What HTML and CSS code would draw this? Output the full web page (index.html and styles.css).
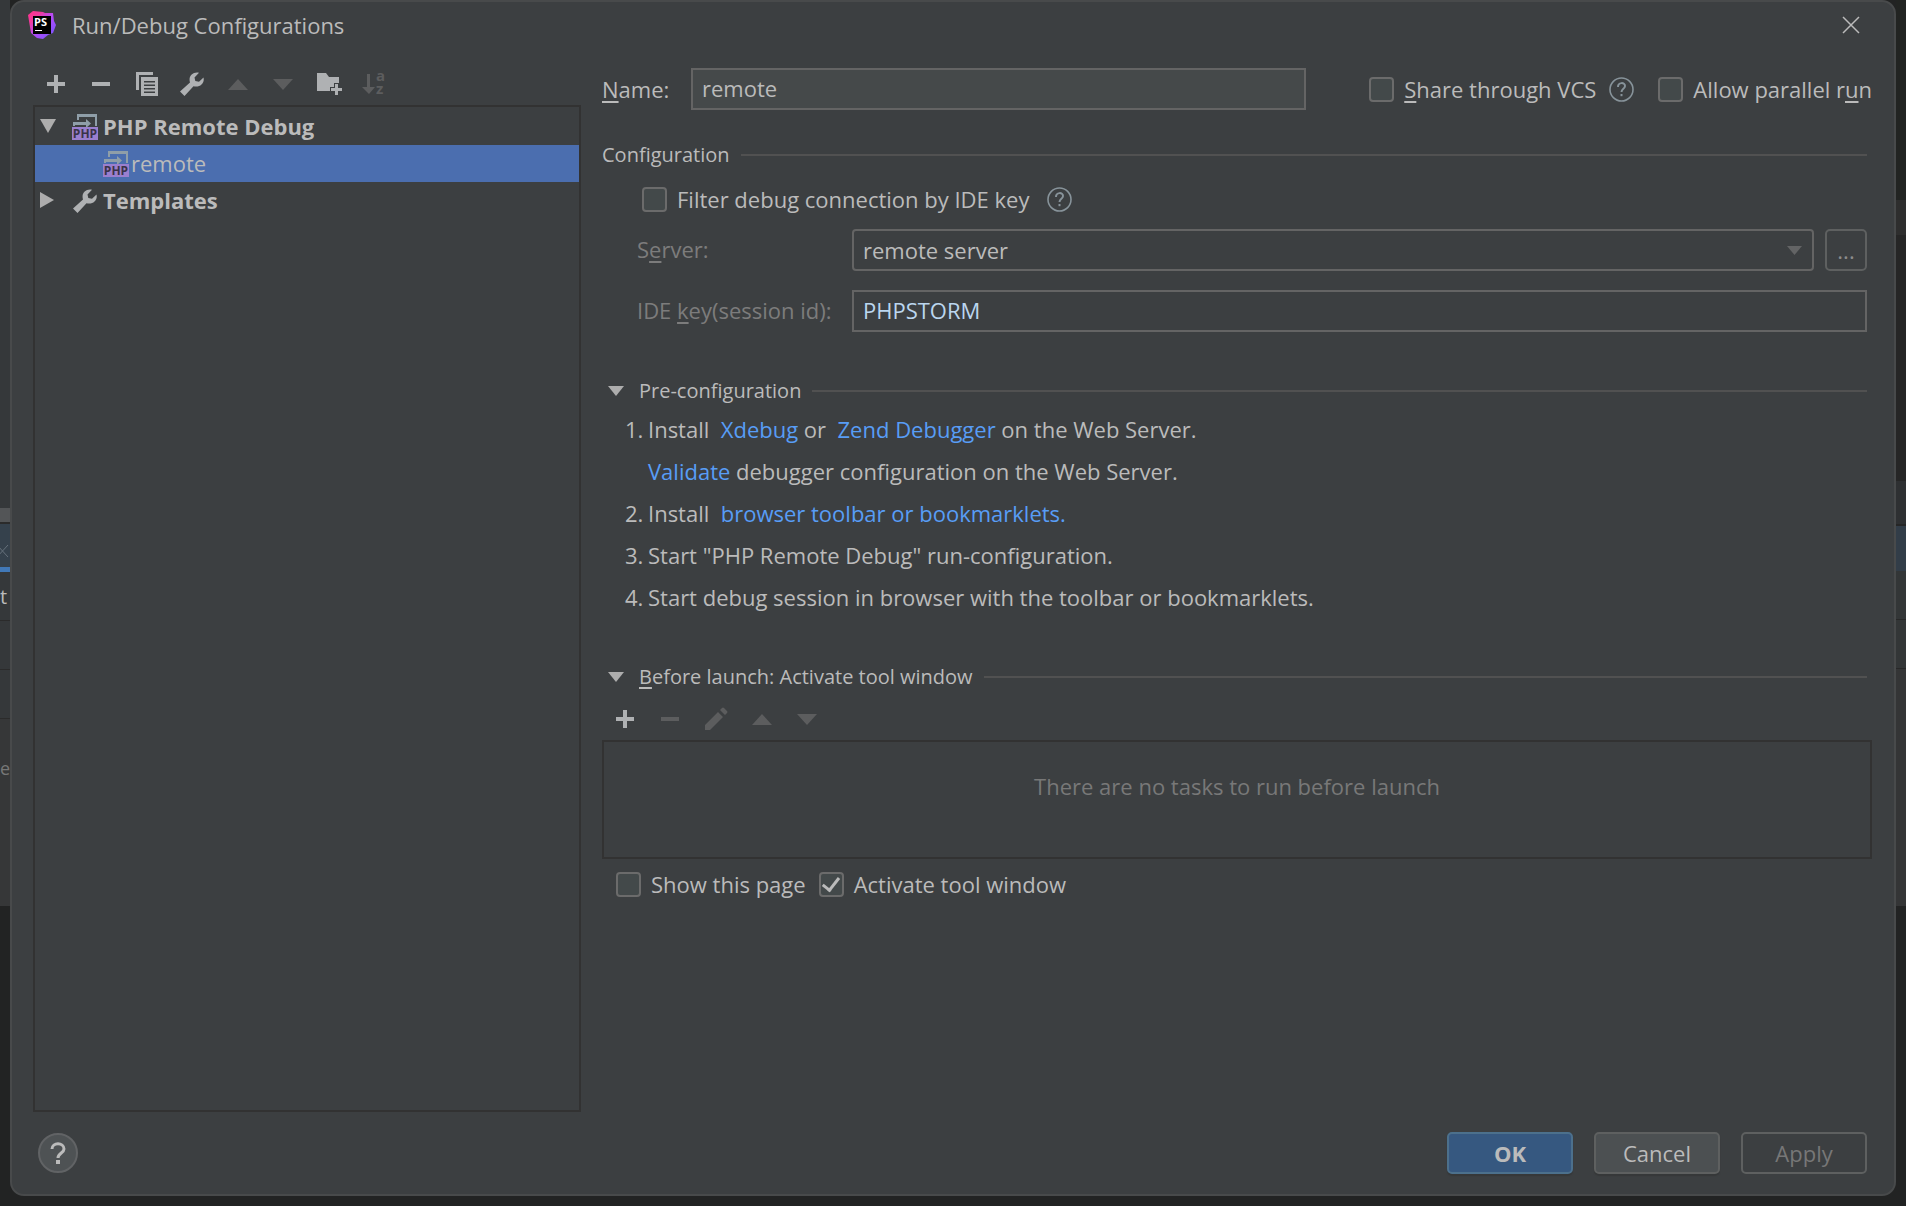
FILE: index.html
```
<!DOCTYPE html>
<html lang="en">
<head>
	<meta charset="UTF-8">
	<title>Run/Debug Configurations</title>
	<link rel="stylesheet" href="styles.css">
</head>
<body>
	<!-- shared icons -->
	<svg class="sprite" aria-hidden="true">
		<symbol id="plus" viewBox="0 0 18 18"><path d="M7 0h4v7h7v4h-7v7H7v-7H0V7h7z"/></symbol>
		<symbol id="minus" viewBox="0 0 18 18"><path d="M0 7h18v4H0z"/></symbol>
		<symbol id="up" viewBox="0 0 20 11"><path d="M0 11L10 0l10 11z"/></symbol>
		<symbol id="down" viewBox="0 0 20 11"><path d="M0 0h20L10 11z"/></symbol>
		<symbol id="wrench" viewBox="0 0 24 24"><path d="M0 19.500L10 10.500C8 4 13-.5 19 .8L14.500 5.500l.8 3.500 3.700.8 4.500-4.300c1.500 6-4 10.500-10 8.700L4.500 24z"/></symbol>
		<symbol id="help" viewBox="0 0 25 25"><circle cx="12.500" cy="12.500" r="11.500" fill="none" stroke="currentColor" stroke-width="1.600"/><path d="M9 10c0-5 7-5 7-1 0 3-3.500 2.500-3.500 6" fill="none" stroke="currentColor" stroke-width="2"/><path d="M11.500 17h2v2.200h-2z"/></symbol>
		<symbol id="phpdebug" viewBox="0 0 26 27">
			<path d="M5 7V1h20v12h-2V4H7v3z" fill="#8f9ea8"/>
			<path d="M1 13V9h13V6l5 4.500-5 4.500v-3H3v1z" fill="#8f9ea8"/>
			<path d="M0 14h26v13H0z" fill="#9a7fce"/>
			<text class="php-text" x="13" y="25" text-anchor="middle">PHP</text>
		</symbol>
	</svg>

	<div class="strip strip-left">
		<div class="l-editor"></div>
		<div class="l-bar"></div>
		<div class="l-tab"><svg width="10" height="14"><path d="M-3 1L8 13M-3 13L8 1" stroke="#66717b" fill="none"/></svg></div>
		<div class="l-row l-first">t</div>
		<div class="l-row"></div>
		<div class="l-row"></div>
		<div class="l-panel">e</div>
	</div>

	<main class="dialog">
		<header class="titlebar">
			<svg class="logo" viewBox="0 0 28 28">
				<defs><linearGradient id="lg" x1="0" y1="0" x2="1" y2="1"><stop offset="0" stop-color="#ff318c"/><stop offset=".25" stop-color="#f03a9c"/><stop offset=".5" stop-color="#b74af7"/><stop offset="1" stop-color="#6b57ff"/></linearGradient></defs>
				<path d="M0 4L5 0l10 1 2 1 8 0 1 8 2 4-3 8-5 2-5 4-6-1-6-5z" fill="url(#lg)"/>
				<path d="M5 5h18v18H5z"/>
				<text class="logo-text" x="6" y="15">PS</text>
				<path d="M7 19h7v1H7z" fill="#fff"/>
			</svg>
			<h1>Run/Debug Configurations</h1>
			<button class="close" aria-label="Close"><svg width="18" height="18"><path d="M1 1l16 16M17 1L1 17" stroke="currentColor" stroke-width="1.500"/></svg></button>
		</header>

		<div class="columns">
			<aside class="sidebar">
				<div class="toolbar tree-toolbar">
					<button aria-label="Add"><svg width="18" height="18"><use href="#plus"/></svg></button>
					<button aria-label="Remove"><svg width="18" height="18"><use href="#minus"/></svg></button>
					<button aria-label="Copy"><svg width="22" height="24"><path d="M0 0h17v3H3v15H0z"/><path fill-rule="evenodd" d="M5 5h17v19H5zM8 9v1.500h11V9zm0 3.500V14h11v-1.500zM8 16v1.500h11V16zm0 3.500V21h11v-1.500z"/></svg></button>
					<button aria-label="Edit templates"><svg width="24" height="24"><use href="#wrench"/></svg></button>
					<button aria-label="Move up" disabled><svg width="20" height="11"><use href="#up"/></svg></button>
					<button aria-label="Move down" disabled><svg width="20" height="11"><use href="#down"/></svg></button>
					<button aria-label="New folder"><svg width="26" height="22"><path d="M1 0h9l3 4h10v6h-5v4h-4v4H1z"/><path d="M19 11h3v4h4v3h-4v4h-3v-4h-4v-3h4z"/></svg></button>
					<button aria-label="Sort" disabled><svg class="sort" width="24" height="26"><path d="M5 3h3v13h5l-6 7-7-7h5z"/><text class="sort-text" x="14" y="10">a</text><text class="sort-text" x="14" y="23">z</text></svg></button>
				</div>
				<ul class="tree">
					<li class="node group"><svg class="arrow" viewBox="0 0 16 16"><path d="M0 1h16L8 15z"/></svg><svg class="node-icon"><use href="#phpdebug"/></svg>PHP Remote Debug</li>
					<li class="node child selected"><svg class="node-icon"><use href="#phpdebug"/></svg>remote</li>
					<li class="node group"><svg class="arrow" viewBox="0 0 16 16"><path d="M0 0v16l14-8z"/></svg><svg class="node-icon wrench"><use href="#wrench"/></svg>Templates</li>
				</ul>
			</aside>

			<form class="settings">
				<div class="name-row">
					<label for="name"><u>N</u>ame:</label>
					<input class="field name-field" type="text" id="name" value="remote">
					<div class="options">
						<label class="check"><input type="checkbox"><span><u>S</u>hare through VCS</span></label>
						<svg class="help-icon"><use href="#help"/></svg>
						<label class="check"><input type="checkbox"><span>Allow parallel r<u>u</u>n</span></label>
					</div>
				</div>

				<h2 class="section first">Configuration</h2>
				<div class="filter-row">
					<label class="check"><input type="checkbox"><span>Filter debug connection by IDE key</span></label>
					<svg class="help-icon"><use href="#help"/></svg>
				</div>
				<div class="form-row">
					<label for="server">S<u>e</u>rver:</label>
					<div class="select-box">
						<select class="field" id="server"><option>remote server</option></select>
						<svg class="select-arrow" width="15" height="9" viewBox="0 0 20 11" preserveAspectRatio="none"><path d="M0 0h20L10 11z"/></svg>
					</div>
					<button class="browse" type="button">...</button>
				</div>
				<div class="form-row key-row">
					<label for="key">IDE <u>k</u>ey(session id):</label>
					<input class="field key-field" type="text" id="key" value="PHPSTORM">
				</div>

				<h2 class="section folding"><svg width="16" height="10" viewBox="0 0 16 10"><path d="M0 0h16L8 10z"/></svg>Pre-configuration</h2>
				<div class="steps">
					<p><b>1.</b>Install &nbsp;<a href="#">Xdebug</a> or &nbsp;<a href="#">Zend Debugger</a> on the Web Server.</p>
					<p><b></b><a href="#">Validate</a> debugger configuration on the Web Server.</p>
					<p><b>2.</b>Install &nbsp;<a href="#">browser toolbar or bookmarklets.</a></p>
					<p><b>3.</b>Start "PHP Remote Debug" run-configuration.</p>
					<p><b>4.</b>Start debug session in browser with the toolbar or bookmarklets.</p>
				</div>

				<h2 class="section folding launch"><svg width="16" height="10" viewBox="0 0 16 10"><path d="M0 0h16L8 10z"/></svg><span><u>B</u>efore launch: Activate tool window</span></h2>
				<div class="toolbar task-toolbar">
					<button type="button" aria-label="Add task"><svg width="18" height="18"><use href="#plus"/></svg></button>
					<button type="button" aria-label="Remove task" disabled><svg width="18" height="18"><use href="#minus"/></svg></button>
					<button type="button" aria-label="Edit task" disabled><svg width="24" height="24"><path d="M1 18L14 5l5 5L6 23H1zM16 3l2-2q1-1 2 0l3 3q1 1 0 2l-2 2z"/></svg></button>
					<button type="button" aria-label="Move task up" disabled><svg width="20" height="11"><use href="#up"/></svg></button>
					<button type="button" aria-label="Move task down" disabled><svg width="20" height="11"><use href="#down"/></svg></button>
				</div>
				<div class="tasks">There are no tasks to run before launch</div>
				<div class="launch-options">
					<label class="check"><input type="checkbox"><span>Show this page</span></label>
					<label class="check"><input type="checkbox" checked><span>Activate tool window</span></label>
				</div>
			</form>
		</div>

		<footer class="footer">
			<button class="help-button" aria-label="Help"><svg width="16" height="22"><path d="M2 7c0-7 12-7 12 0 0 4-6 4-6 9" fill="none" stroke="currentColor" stroke-width="3"/><path d="M6 18h4v4H6z"/></svg></button>
			<button class="btn primary">OK</button>
			<button class="btn">Cancel</button>
			<button class="btn" disabled>Apply</button>
		</footer>
	</main>

	<div class="strip strip-right">
		<div class="r-top"></div>
		<div class="r-bar"></div>
		<div class="r-editor"></div>
		<div class="r-head"></div>
		<div class="r-tab"></div>
		<div class="r-row"></div>
		<div class="r-row"></div>
		<div class="r-panel"></div>
	</div>
</body>
</html>
```
FILE: styles.css
```
* {
	box-sizing: border-box;
}

body {
	margin: 0;
	min-height: 100vh;
	display: grid;
	grid-template-columns: 10px 1fr 10px;
	background-color: #222323;
	color: #bbbbbb;
	font-family: "Open Sans", "Noto Sans", sans-serif;
	font-size: 22px;
	line-height: 26px;
}

button, input, select {
	font: inherit;
	color: inherit;
}

button {
	padding: 0;
	border: none;
	background: none;
}

svg {
	fill: currentColor;
	flex: none;
}

u {
	text-underline-offset: 3px;
}

.sprite {
	position: absolute;
	width: 0;
	height: 0;
}

/* window behind the dialog */
.strip {
	overflow: hidden;
}

.l-editor {
	height: 508px;
	background-color: #35383a;
}

.l-bar {
	height: 16px;
	background-color: #535557;
	border-bottom: 2px solid #2b2b2b;
}

.l-tab {
	height: 48px;
	padding-top: 18px;
	background-color: #35414c;
	border-bottom: 5px solid #4179b8;
	line-height: 14px;
}

.l-row {
	height: 49px;
	background-color: #35383a;
	border-bottom: 1px solid #2b2b2b;
}

.l-first {
	padding-top: 12px;
	font-size: 20px;
}

.l-panel {
	height: 187px;
	padding-top: 36px;
	background-color: #363738;
	color: #777777;
	font-size: 18px;
}

.r-top {
	height: 200px;
	background-color: #222422;
}

.r-bar {
	height: 35px;
	background-color: #2e2e2e;
}

.r-editor {
	height: 246px;
	background-color: #262626;
}

.r-head {
	height: 45px;
	background-color: #2e3032;
	border-bottom: 2px solid #262626;
}

.r-tab {
	height: 45px;
	background-color: #323d48;
}

.r-row {
	height: 49px;
	background-color: #333637;
	border-bottom: 1px solid #282828;
}

.r-panel {
	height: 237px;
	background-color: #343536;
}

.dialog {
	display: flex;
	flex-direction: column;
	margin-bottom: 10px;
	background-color: #3c3f41;
	border: 2px solid #484a4b;
	border-radius: 14px;
}

.titlebar {
	display: flex;
	align-items: center;
	height: 48px;
	padding: 0 34px 2px 16px;
}

.logo {
	width: 28px;
	height: 28px;
	fill: #000000;
	overflow: visible;
}

.logo-text {
	font-size: 11px;
	font-weight: bold;
	fill: #ffffff;
}

h1 {
	flex: 1;
	margin: 0 0 0 16px;
	font-size: 22px;
	font-weight: normal;
}

.close {
	display: flex;
}

.columns {
	flex: 1;
	display: flex;
	gap: 21px;
	padding: 0 22px 0 21px;
}

.sidebar {
	display: flex;
	flex-direction: column;
	flex: 0 0 548px;
	padding-top: 13px;
}

.toolbar {
	display: flex;
	color: #afb1b3;
}

.tree-toolbar {
	width: 364px;
}

.task-toolbar {
	width: 228px;
}

.toolbar button {
	display: flex;
	align-items: center;
	justify-content: center;
	flex: 1;
	height: 42px;
}

.toolbar button:disabled {
	color: #5c5d5e;
}

.sort {
	overflow: visible;
}

.sort-text {
	font-size: 15px;
	font-weight: bold;
}

.tree {
	flex: 1;
	margin: 0;
	padding: 1px 0 0;
	list-style: none;
	border: 2px solid #323232;
}

.node {
	display: flex;
	align-items: center;
	gap: 5px;
	height: 37px;
	padding: 0 0 2px 5px;
}

.group {
	font-weight: bold;
}

.child {
	gap: 2px;
	padding-left: 68px;
}

.selected {
	background-color: #4b6eaf;
}

.arrow {
	width: 16px;
	height: 16px;
	margin-right: 11px;
	color: #adadad;
}

.node-icon {
	width: 26px;
	height: 27px;
	margin-top: 2px;
}

.node-icon.wrench {
	height: 24px;
	color: #afb1b3;
}

.php-text {
	font-size: 12px;
	font-weight: bold;
	fill: #3a3348;
}

.settings {
	flex: 1;
	padding-top: 18px;
}

.name-row {
	display: flex;
	align-items: center;
}

.name-row > label {
	width: 89px;
}

.field {
	height: 42px;
	padding: 0 9px;
	background-color: #3c3f41;
	border: 2px solid #646464;
	border-radius: 0;
}

.name-field {
	flex: 1;
	padding-bottom: 2px;
	background-color: #45494a;
}

.options {
	display: flex;
	align-items: center;
	margin-left: 63px;
}

.options .help-icon {
	margin: 0 24px 0 13px;
}

.check {
	display: flex;
	align-items: center;
	gap: 10px;
}

.check input {
	appearance: none;
	display: grid;
	place-items: center;
	width: 25px;
	height: 25px;
	margin: 0;
	background-color: #43494a;
	border: 2px solid #6b6b6b;
	border-radius: 4px;
}

.check input:checked::before {
	content: "";
	width: 7px;
	height: 14px;
	margin-bottom: 4px;
	border: solid #bbbbbb;
	border-width: 0 3px 3px 0;
	transform: rotate(38deg);
}

.help-icon {
	width: 25px;
	height: 25px;
	color: #87939a;
}

.section {
	display: flex;
	align-items: center;
	height: 24px;
	margin: 47px 5px 0 0;
	font-size: 20px;
	font-weight: normal;
}

.section.first {
	margin-top: 33px;
}

.section::after {
	content: "";
	flex: 1;
	height: 2px;
	margin-left: 11px;
	background-color: #515151;
}

.folding {
	padding-left: 6px;
}

.folding svg {
	margin-right: 15px;
	color: #adadad;
}

.filter-row {
	display: flex;
	align-items: center;
	gap: 18px;
	margin: 19px 0 17px 40px;
}

.form-row {
	display: flex;
	align-items: center;
	margin: 0 5px 0 35px;
}

.form-row label {
	width: 215px;
	padding-bottom: 2px;
	color: #7c7c7c;
}

.select-box {
	position: relative;
	flex: 1;
}

.select-box select {
	appearance: none;
	display: block;
	width: 100%;
	border-radius: 4px;
}

.select-arrow {
	position: absolute;
	top: 17px;
	right: 12px;
	color: #636465;
}

.browse {
	width: 42px;
	height: 42px;
	margin-left: 11px;
	border: 2px solid #5e6060;
	border-radius: 5px;
	color: #8c8c8c;
}

.key-row {
	margin-top: 19px;
}

.key-field {
	flex: 1;
	padding-bottom: 2px;
	color: #bbd6ef;
}

.steps {
	padding: 5px 0 0 23px;
}

.steps p {
	display: flex;
	align-items: center;
	height: 42px;
	margin: 0;
	white-space: pre;
}

.steps b {
	width: 23px;
	font-weight: normal;
}

a {
	color: #589df6;
	text-decoration: none;
}

.launch {
	margin: 47px 5px 9px 0;
}

.tasks {
	height: 119px;
	padding-top: 31px;
	border: 2px solid #323232;
	color: #787878;
	text-align: center;
}

.launch-options {
	display: flex;
	gap: 13px;
	margin: 12px 0 0 14px;
}

.footer {
	display: flex;
	align-items: center;
	gap: 21px;
	padding: 20px 27px 20px 26px;
}

.help-button {
	display: flex;
	align-items: center;
	justify-content: center;
	width: 40px;
	height: 40px;
	margin-right: auto;
	background-color: #4e5254;
	border: 2px solid #616365;
	border-radius: 50%;
}

.btn {
	width: 126px;
	height: 42px;
	background-color: #4c5052;
	border: 2px solid #5e6060;
	border-radius: 5px;
	box-shadow: 0 2px 1px #363839;
}

.primary {
	background-color: #365880;
	border-color: #4c708c;
	font-weight: bold;
}

.btn:disabled {
	background-color: #3c3f41;
	box-shadow: none;
	color: #777777;
}
```
